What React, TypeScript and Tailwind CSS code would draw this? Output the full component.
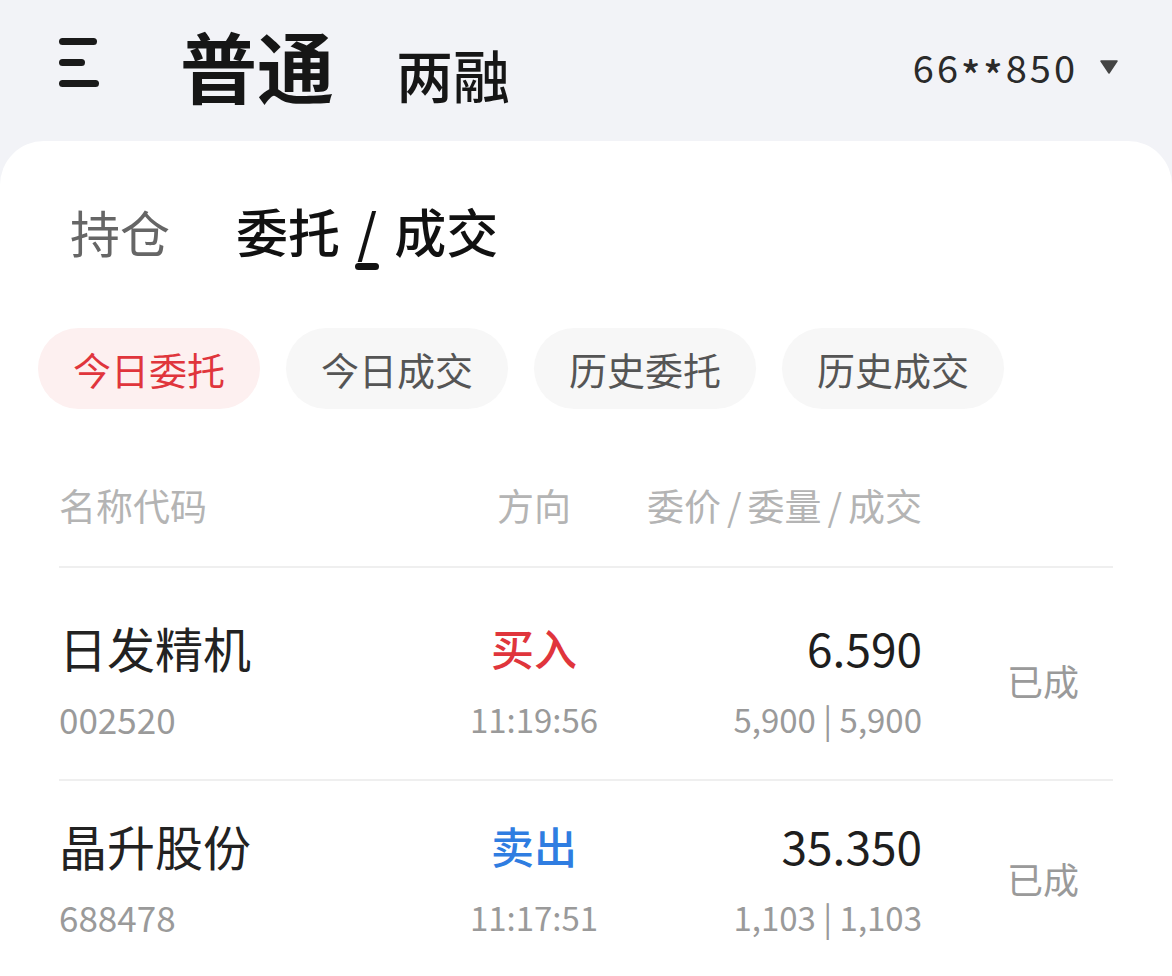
import React from "react";

// 委托列表页 · 今日委托

type Order = {
  name: string;
  code: string;
  side: "买入" | "卖出";
  time: string;
  price: string;
  qty: string;
  status: string;
};

const ORDERS: Order[] = [
  { name: "日发精机", code: "002520", side: "买入", time: "11:19:56", price: "6.590", qty: "5,900 | 5,900", status: "已成" },
  { name: "晶升股份", code: "688478", side: "卖出", time: "11:17:51", price: "35.350", qty: "1,103 | 1,103", status: "已成" },
];

const FILTERS = ["今日委托", "今日成交", "历史委托", "历史成交"];

const font = { fontFamily: '"Noto Sans CJK SC", "Noto Sans", sans-serif' };

export default function App() {
  return (
    <div className="min-h-[976px] w-[1172px] overflow-hidden bg-[#f2f3f7]" style={font}>
      <TopBar />
      <div className="rounded-t-[44px] bg-white">
        <Tabs />
        <Filters />
        <OrderTable />
      </div>
    </div>
  );
}

function TopBar() {
  return (
    <div className="flex h-[141px] items-start pl-[59px] pr-[54px] pt-[20px]">
      <div className="mt-[18px] flex w-[40px] flex-col gap-[14px]">
        <span className="h-[7px] w-[38px] rounded-full bg-[#1a1a1a]" />
        <span className="h-[7px] w-[26px] rounded-full bg-[#1a1a1a]" />
        <span className="h-[7px] w-[40px] rounded-full bg-[#1a1a1a]" />
      </div>
      <div className="ml-[81px] flex items-baseline gap-[62px]">
        <span className="text-[77px] font-bold leading-[90px] text-[#161616]">普通</span>
        <span className="text-[57px] font-medium leading-[70px] text-[#161616]">两融</span>
      </div>
      <div className="ml-auto mt-[20px] flex items-center gap-[22px]">
        <span className="text-[38px] leading-[52px] tracking-[3px] text-[#2a2a2a]">
          66<span className="relative top-[8px] text-[40px] font-medium">**</span>850
        </span>
        <svg width="18" height="14" viewBox="0 0 18 14">
          <path d="M1 1h16L9 13z" fill="#444" strokeLinejoin="round" stroke="#444" strokeWidth="1.5" />
        </svg>
      </div>
    </div>
  );
}

function Tabs() {
  return (
    <div className="flex items-start gap-[66px] pl-[70px] pt-[52px]">
      <span className="text-[50px] leading-[76px] text-[#666]">持仓</span>
      <div className="flex flex-col items-center">
        <span className="text-[52px] font-medium leading-[76px] text-[#111]">
          委托<span className="mx-[17px]">/</span>成交
        </span>
        <span className="mt-[-6px] h-[7px] w-[24px] rounded-full bg-[#111]" />
      </div>
    </div>
  );
}

function Filters() {
  return (
    <div className="mt-[58px] flex gap-[26px] pl-[38px]">
      {FILTERS.map((f, i) => (
        <span
          key={f}
          className={
            i === 0
              ? "flex h-[81px] w-[222px] items-center justify-center rounded-full bg-[#fdf0f0] text-[38px] text-[#e0353c]"
              : "flex h-[81px] w-[222px] items-center justify-center rounded-full bg-[#f7f7f7] text-[38px] text-[#555]"
          }
        >
          {f}
        </span>
      ))}
    </div>
  );
}

function OrderTable() {
  return (
    <div className="mx-[59px] mt-[70px]">
      <div className="grid grid-cols-[400px_150px_313px_1fr] border-b-2 border-[#efefef] pb-[35px] text-[37px] leading-[52px] text-[#b4b4b4]">
        <span>名称代码</span>
        <span className="text-center">方向</span>
        <span className="text-right">
          委价<span className="mx-[6px]">/</span>委量<span className="mx-[6px]">/</span>成交
        </span>
        <span />
      </div>
      <div className="pt-[15px]">
        {ORDERS.map((o) => (
          <OrderRow key={o.code} o={o} />
        ))}
      </div>
    </div>
  );
}

function OrderRow({ o }: { o: Order }) {
  const sideColor = o.side === "买入" ? "text-[#e0353c]" : "text-[#2f7de1]";
  return (
    <div className="grid grid-cols-[400px_150px_313px_1fr] items-center border-b-2 border-[#efefef] pb-[38px] pt-[36px]">
      <div className="flex flex-col gap-[22px]">
        <span className="text-[48px] leading-[56px] text-[#222]">{o.name}</span>
        <span className="text-[35px] leading-[44px] text-[#9a9a9a]">{o.code}</span>
      </div>
      <div className="flex flex-col items-center gap-[22px]">
        <span className={`text-[43px] font-medium leading-[56px] ${sideColor}`}>{o.side}</span>
        <span className="text-[33px] leading-[44px] text-[#9a9a9a]">{o.time}</span>
      </div>
      <div className="flex flex-col items-end gap-[22px]">
        <span className="text-[46px] leading-[56px] text-[#1e1e1e]">{o.price}</span>
        <span className="text-[33px] leading-[44px] text-[#9a9a9a]">{o.qty}</span>
      </div>
      <span className="pl-[85px] text-[36px] leading-[50px] text-[#9a9a9a]">{o.status}</span>
    </div>
  );
}
